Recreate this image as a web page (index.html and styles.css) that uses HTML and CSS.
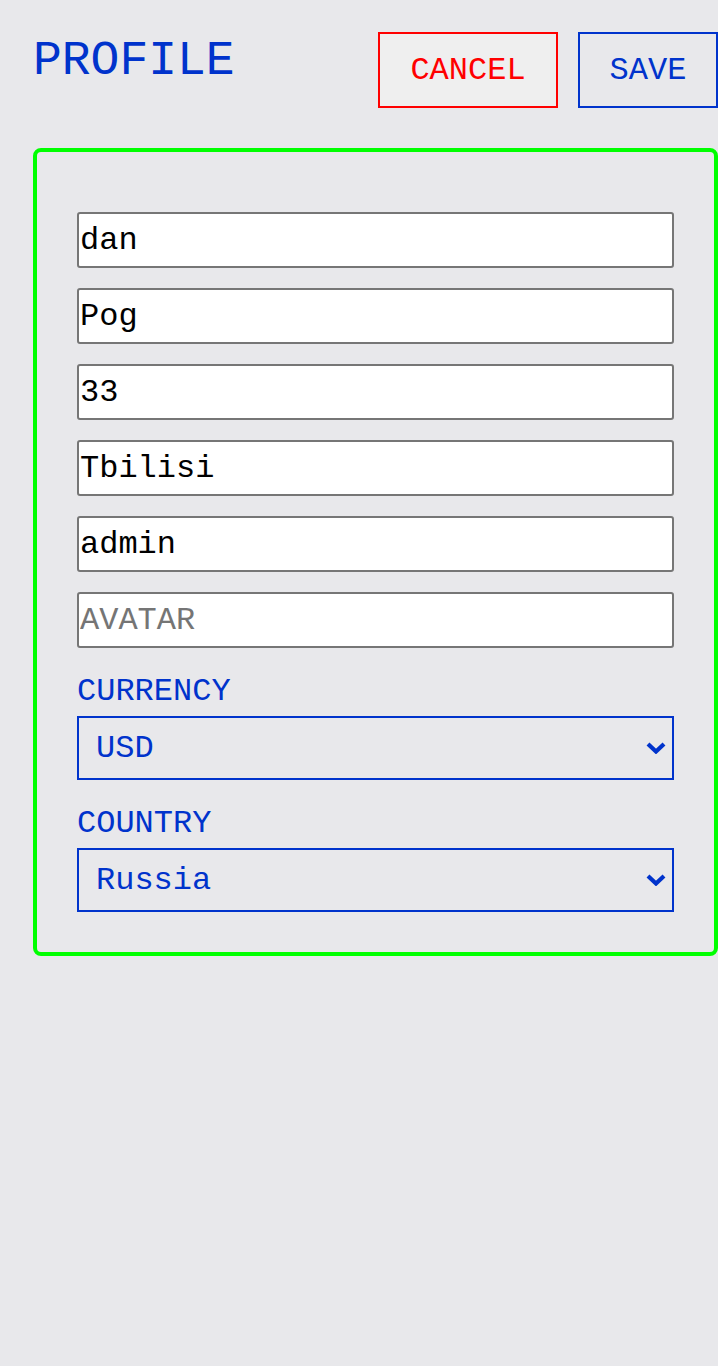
FILE: index.html
```html
<!DOCTYPE html>
<html lang="en">
<head>
<meta charset="utf-8">
<title>Profile</title>
<link rel="stylesheet" href="styles.css">
</head>
<body>
<div class="page">
  <header class="header">
    <h1 class="title">PROFILE</h1>
    <div class="actions">
      <button class="btn btn-cancel" type="button">CANCEL</button>
      <button class="btn btn-save" type="button">SAVE</button>
    </div>
  </header>
  <main class="card">
    <form class="form">
      <input class="input" type="text" value="dan">
      <input class="input" type="text" value="Pog">
      <input class="input" type="text" value="33">
      <input class="input" type="text" value="Tbilisi">
      <input class="input" type="text" value="admin">
      <input class="input" type="text" placeholder="AVATAR">
      <div class="field">
        <label class="label" for="currency">CURRENCY</label>
        <div class="select-wrap">
          <select class="select" id="currency">
            <option>USD</option>
            <option>EUR</option>
            <option>RUB</option>
          </select>
          <svg class="chevron" viewBox="0 0 20 12" width="20" height="12" aria-hidden="true"><path d="M2 2 L10 9.5 L18 2" fill="none" stroke="#0033cc" stroke-width="4.2"/></svg>
        </div>
      </div>
      <div class="field">
        <label class="label" for="country">COUNTRY</label>
        <div class="select-wrap">
          <select class="select" id="country">
            <option>Russia</option>
            <option>Georgia</option>
          </select>
          <svg class="chevron" viewBox="0 0 20 12" width="20" height="12" aria-hidden="true"><path d="M2 2 L10 9.5 L18 2" fill="none" stroke="#0033cc" stroke-width="4.2"/></svg>
        </div>
      </div>
    </form>
  </main>
</div>
</body>
</html>
```

FILE: styles.css
```css
* {
  box-sizing: border-box;
}

html, body {
  margin: 0;
  padding: 0;
  background: #e8e8eb;
}

body {
  font-family: "Liberation Mono", "DejaVu Sans Mono", monospace;
  overflow-x: hidden;
}

.page {
  padding: 32px 0 0 33px;
  width: 718px;
}

.header {
  display: flex;
  justify-content: space-between;
  align-items: flex-start;
}

.title {
  margin: 0;
  font-size: 48px;
  font-weight: normal;
  line-height: 58px;
  color: #0033cc;
}

.actions {
  display: flex;
  gap: 20px;
}

.btn {
  height: 76px;
  padding: 0;
  font-family: "Liberation Mono", monospace;
  font-size: 32px;
  border: 2px solid;
  border-radius: 0;
  cursor: pointer;
}

.btn-cancel {
  width: 180px;
  color: #ff0000;
  border-color: #ff0000;
  background: #efefef;
}

.btn-save {
  width: 140px;
  color: #0033cc;
  border-color: #0033cc;
  background: transparent;
}

.card {
  display: block;
  margin-top: 40px;
  border: 4px solid #00ff00;
  border-radius: 8px;
  padding: 60px 40px 40px;
}

.form {
  display: flex;
  flex-direction: column;
  gap: 20px;
}

.input {
  width: 100%;
  height: 56px;
  padding: 1px 1px;
  font-family: "Liberation Mono", monospace;
  font-size: 32px;
  color: #000;
  background: #fff;
  border: 2px solid #767676;
  border-radius: 3px;
  outline: none;
}

.input::placeholder {
  color: #757575;
}

.field {
  display: flex;
  flex-direction: column;
}

.label {
  display: block;
  font-size: 32px;
  line-height: 48px;
  color: #0033cc;
}

.select-wrap {
  position: relative;
}

.select {
  display: block;
  width: 100%;
  height: 64px;
  padding: 0 40px 0 17px;
  font-family: "Liberation Mono", monospace;
  font-size: 32px;
  color: #0033cc;
  background: transparent;
  border: 2px solid #0033cc;
  border-radius: 0;
  appearance: none;
  -webkit-appearance: none;
  outline: none;
}

.chevron {
  position: absolute;
  right: 8px;
  top: 26px;
  pointer-events: none;
}
```
